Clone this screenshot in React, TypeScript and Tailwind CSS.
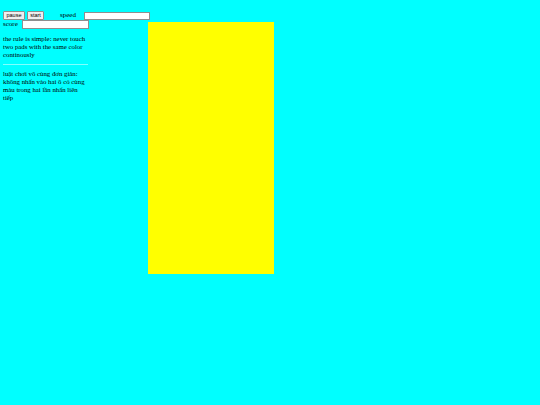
export default function App() {
    return (
        <div className="min-h-screen bg-[#00ffff] text-black" style={{ fontFamily: '"Liberation Serif", serif' }}>
            <div className="flex items-center pt-[11px] pl-[3px]">
                <button className="h-[9px] w-[22px] border border-[#8f8f8f] bg-[#efefef] text-[5.5px] leading-none font-['Liberation_Sans',sans-serif] rounded-[1px]">
                    pause
                </button>
                <button className="ml-[2px] h-[9px] w-[17px] border border-[#8f8f8f] bg-[#efefef] text-[5.5px] leading-none font-['Liberation_Sans',sans-serif] rounded-[1px]">
                    start
                </button>
                <span className="ml-[16px] text-[7px] leading-none">speed</span>
                <input className="ml-[8px] h-[8px] w-[66px] border border-[#8f8f8f] bg-white" />
            </div>
            <div className="flex">
                <div className="ml-[3px] w-[85px] flex-none">
                    <div className="flex items-center">
                        <span className="text-[7px] leading-none">score</span>
                        <input className="ml-[4px] h-[9px] w-[67px] border border-[#8f8f8f] bg-white" />
                    </div>
                    <p className="mt-[6px] text-[6.8px] leading-[8px]">
                        the rule is simple: never touch two pads with the same color continously
                    </p>
                    <hr className="mt-[5px] border-t border-[#80ffff]" />
                    <p className="mt-[5px] text-[6.8px] leading-[8px]">
                        luật chơi vô cùng đơn giản: không nhấn vào hai ô có cùng màu trong hai lần nhấn liên tiếp
                    </p>
                </div>
                <div className="ml-[60px] mt-[2px] h-[252px] w-[126px] flex-none bg-[#ffff00]" />
            </div>
        </div>
    );
}
